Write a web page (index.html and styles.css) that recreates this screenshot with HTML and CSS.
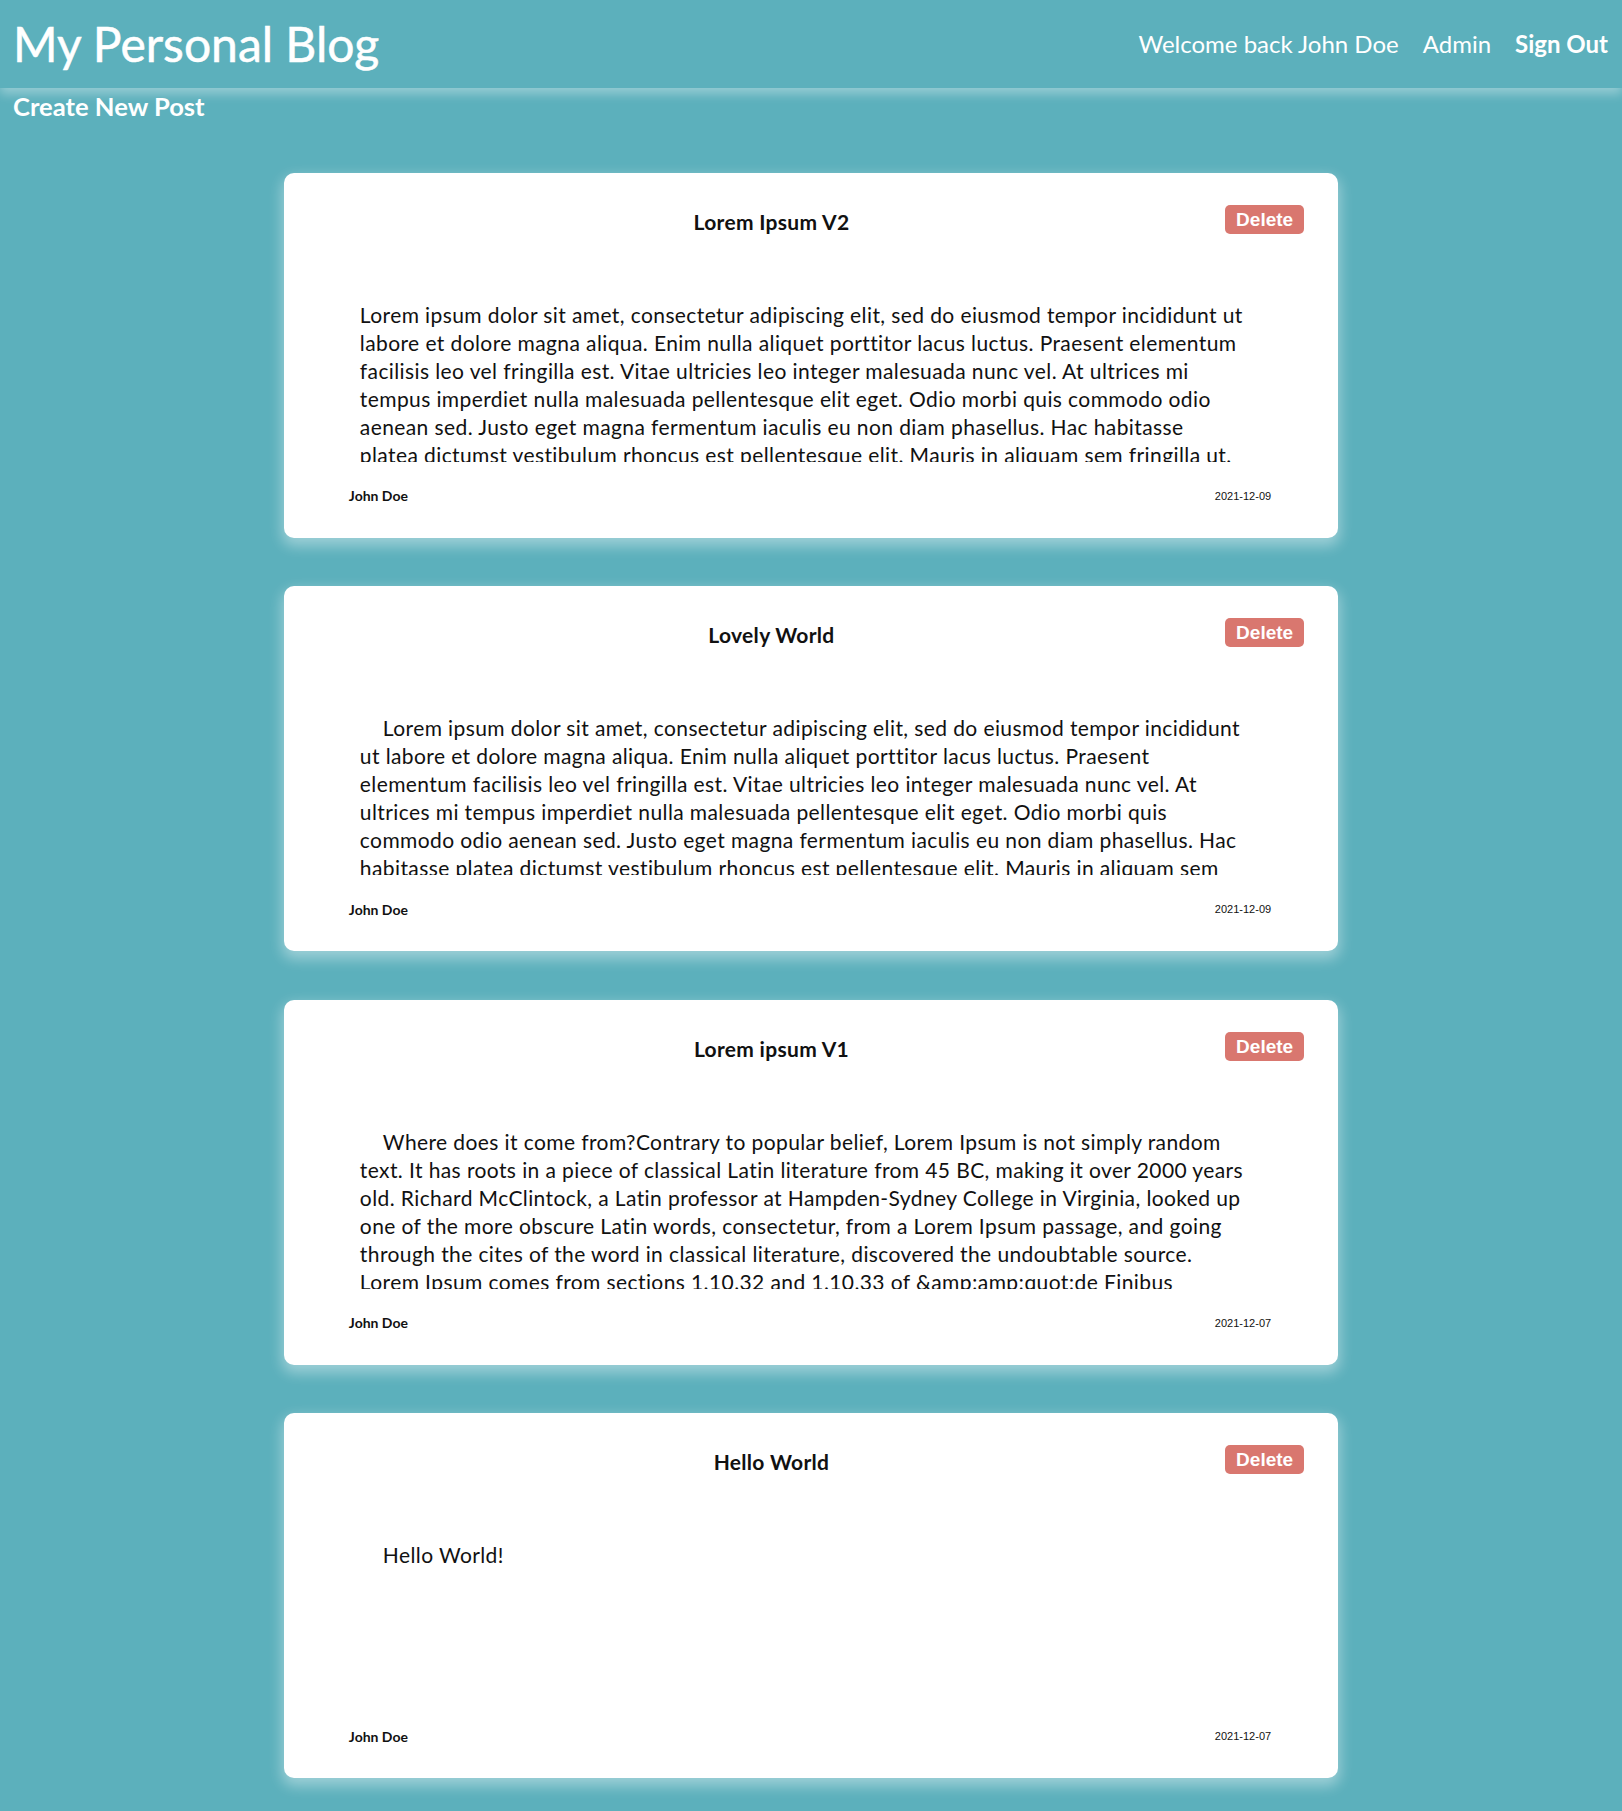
FILE: index.html
```html
<!DOCTYPE html>
<html lang="en">
<head>
<meta charset="utf-8">
<title>My Personal Blog</title>
<link rel="stylesheet" href="styles.css">
</head>
<body>
<header class="topbar">
  <h1 class="brand">My Personal Blog</h1>
  <nav class="nav">
    <span class="nav-item">Welcome back John Doe</span>
    <a class="nav-item" href="#">Admin</a>
    <a class="nav-item nav-strong" href="#">Sign Out</a>
  </nav>
</header>
<div class="subnav">
  <a class="subnav-link" href="#">Create New Post</a>
</div>
<main class="posts">
  <article class="post">
    <div class="post-head">
      <h2 class="post-title">Lorem Ipsum V2</h2>
      <button class="btn-delete">Delete</button>
    </div>
    <div class="post-body">
      <p class="post-text">Lorem ipsum dolor sit amet, consectetur adipiscing elit, sed do eiusmod tempor incididunt ut<br>labore et dolore magna aliqua. Enim nulla aliquet porttitor lacus luctus. Praesent elementum<br>facilisis leo vel fringilla est. Vitae ultricies leo integer malesuada nunc vel. At ultrices mi<br>tempus imperdiet nulla malesuada pellentesque elit eget. Odio morbi quis commodo odio<br>aenean sed. Justo eget magna fermentum iaculis eu non diam phasellus. Hac habitasse<br>platea dictumst vestibulum rhoncus est pellentesque elit. Mauris in aliquam sem fringilla ut.</p>
    </div>
    <div class="post-foot">
      <span class="post-author">John Doe</span>
      <span class="post-date">2021-12-09</span>
    </div>
  </article>
  <article class="post">
    <div class="post-head">
      <h2 class="post-title">Lovely World</h2>
      <button class="btn-delete">Delete</button>
    </div>
    <div class="post-body">
      <p class="post-text indented">Lorem ipsum dolor sit amet, consectetur adipiscing elit, sed do eiusmod tempor incididunt<br>ut labore et dolore magna aliqua. Enim nulla aliquet porttitor lacus luctus. Praesent<br>elementum facilisis leo vel fringilla est. Vitae ultricies leo integer malesuada nunc vel. At<br>ultrices mi tempus imperdiet nulla malesuada pellentesque elit eget. Odio morbi quis<br>commodo odio aenean sed. Justo eget magna fermentum iaculis eu non diam phasellus. Hac<br>habitasse platea dictumst vestibulum rhoncus est pellentesque elit. Mauris in aliquam sem</p>
    </div>
    <div class="post-foot">
      <span class="post-author">John Doe</span>
      <span class="post-date">2021-12-09</span>
    </div>
  </article>
  <article class="post">
    <div class="post-head">
      <h2 class="post-title">Lorem ipsum V1</h2>
      <button class="btn-delete">Delete</button>
    </div>
    <div class="post-body">
      <p class="post-text indented">Where does it come from?Contrary to popular belief, Lorem Ipsum is not simply random<br>text. It has roots in a piece of classical Latin literature from 45 BC, making it over 2000 years<br>old. Richard McClintock, a Latin professor at Hampden-Sydney College in Virginia, looked up<br>one of the more obscure Latin words, consectetur, from a Lorem Ipsum passage, and going<br>through the cites of the word in classical literature, discovered the undoubtable source.<br>Lorem Ipsum comes from sections 1.10.32 and 1.10.33 of &amp;amp;amp;quot;de Finibus</p>
    </div>
    <div class="post-foot">
      <span class="post-author">John Doe</span>
      <span class="post-date">2021-12-07</span>
    </div>
  </article>
  <article class="post">
    <div class="post-head">
      <h2 class="post-title">Hello World</h2>
      <button class="btn-delete">Delete</button>
    </div>
    <div class="post-body">
      <p class="post-text indented">Hello World!</p>
    </div>
    <div class="post-foot">
      <span class="post-author">John Doe</span>
      <span class="post-date">2021-12-07</span>
    </div>
  </article>
</main>
</body>
</html>
```
FILE: styles.css
```css
html, body {
  margin: 0;
  padding: 0;
}

body {
  background: #5cb0bc;
  font-family: Lato, "Open Sans", sans-serif;
  color: #111;
}

.topbar {
  height: 88px;
  box-sizing: border-box;
  display: flex;
  align-items: center;
  justify-content: space-between;
  padding: 0 14px 0 13px;
  box-shadow: 0 6px 10px rgba(255, 255, 255, 0.35);
}

.brand {
  margin: 0;
  font-size: 48px;
  line-height: 1;
  font-weight: 400;
  color: #fff;
  -webkit-text-stroke: 0.5px #fff;
}

.nav {
  display: flex;
  align-items: center;
  gap: 24px;
}

.nav-item {
  color: #fff;
  font-size: 24px;
  line-height: 1;
  text-decoration: none;
}

.nav-strong {
  font-weight: 700;
}

.subnav {
  padding: 6px 13px 0;
}

.subnav-link {
  display: inline-block;
  color: #fff;
  font-size: 25.6px;
  line-height: 1;
  font-weight: 700;
  text-decoration: none;
}

.posts {
  width: 65%;
  margin: 53px auto 0;
  display: flex;
  flex-direction: column;
  gap: 48.5px;
  padding-bottom: 30px;
}

.post {
  height: 365px;
  box-sizing: border-box;
  background: #fff;
  border-radius: 10px;
  box-shadow: 0 6px 14px 2px rgba(255, 255, 255, 0.4);
  padding: 32px 34px 0;
  display: flex;
  flex-direction: column;
}

.post-head {
  display: flex;
  align-items: center;
  height: 29px;
}

.post-title {
  flex: 1;
  margin: 4px 0 0;
  text-align: center;
  font-size: 21px;
  letter-spacing: 0.3px;
  font-weight: 700;
  color: #111;
}

.btn-delete {
  font-family: "Liberation Sans", Arial, sans-serif;
  font-size: 19px;
  font-weight: 700;
  line-height: 23px;
  color: #fff;
  background: #d9776f;
  border: none;
  border-radius: 5px;
  padding: 3px 11px;
}

.post-body {
  margin-top: 67px;
  padding: 0 10px 0 42px;
  height: 161px;
  overflow: hidden;
}

.post-text {
  margin: 0;
  font-size: 21px;
  line-height: 28px;
  letter-spacing: 0.4px;
  white-space: nowrap;
  color: #111;
}

.indented {
  text-indent: 23px;
}

.post-foot {
  margin-top: 25px;
  padding: 0 33px 0 31px;
  display: flex;
  align-items: center;
  justify-content: space-between;
  height: 18px;
}

.post-author {
  font-size: 14px;
  font-weight: 700;
  color: #111;
}

.post-date {
  font-family: "Liberation Sans", Arial, sans-serif;
  font-size: 11px;
  color: #111;
}
```
